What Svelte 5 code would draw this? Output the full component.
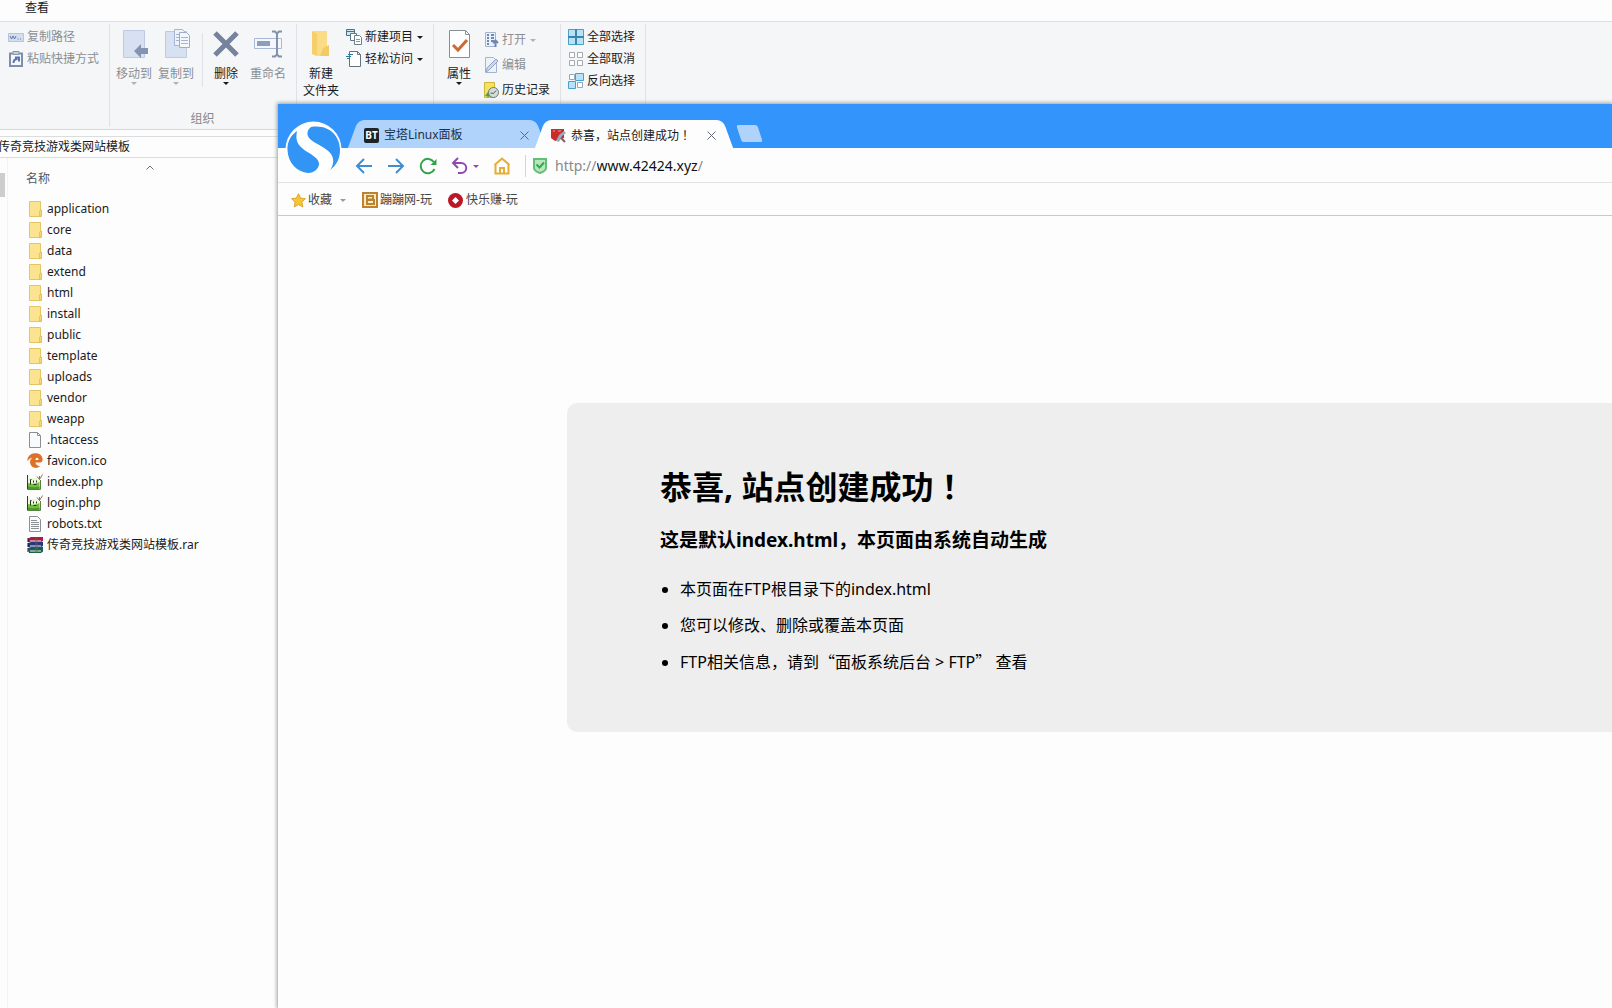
<script lang="ts">
	type FileKind = 'folder' | 'blank' | 'ico' | 'php' | 'txt' | 'rar';

	const files: { name: string; kind: FileKind }[] = [
		{ name: 'application', kind: 'folder' },
		{ name: 'core', kind: 'folder' },
		{ name: 'data', kind: 'folder' },
		{ name: 'extend', kind: 'folder' },
		{ name: 'html', kind: 'folder' },
		{ name: 'install', kind: 'folder' },
		{ name: 'public', kind: 'folder' },
		{ name: 'template', kind: 'folder' },
		{ name: 'uploads', kind: 'folder' },
		{ name: 'vendor', kind: 'folder' },
		{ name: 'weapp', kind: 'folder' },
		{ name: '.htaccess', kind: 'blank' },
		{ name: 'favicon.ico', kind: 'ico' },
		{ name: 'index.php', kind: 'php' },
		{ name: 'login.php', kind: 'php' },
		{ name: 'robots.txt', kind: 'txt' },
		{ name: '传奇竞技游戏类网站模板.rar', kind: 'rar' }
	];

	let folderPath = $state('传奇竞技游戏类网站模板');
	let host = $state('www.42424.xyz');
	let activeTab = $state(1);
</script>

{#snippet fileIcon(kind: FileKind)}
	<svg class="file-icon" viewBox="0 0 16 16" aria-hidden="true">
		{#if kind === 'folder'}
			<path d="M2.5 .5h11v9h1v6h-12z" fill="#fbe38f" stroke="#e3c566" />
			<path d="M12.5 15v-5l2-1v6z" fill="#f7d774" stroke="#dcbb57" stroke-width=".7" />
		{:else if kind === 'blank'}
			<path d="M2.5 .5h8l3 3v12h-11z" fill="#f9fafb" stroke="#8b8e92" />
			<path d="M10.5 .5v3h3" fill="none" stroke="#8b8e92" />
		{:else if kind === 'txt'}
			<path d="M2.5 .5h8l3 3v12h-11z" fill="#f9fafb" stroke="#8b8e92" />
			<path d="M4 4.500h6M4 6.500h8M4 8.500h8M4 10.500h8M4 12.500h8" stroke="#8f9398" />
		{:else if kind === 'ico'}
			<path
				d="M1 4.500C3 1 6-.2 9.500.3c4 .5 6.300 3 6.100 6.700-.1 1.800-1.500 2.600-3.500 2.600H8.500c.3 2 1.800 3.400 4.500 3.700-3.500 3-8.500 2-9.700-2.700C2.600 8 3.500 6 5.500 4.800 4 4.700 2.500 5.500.5 8c-.3-1.300 0-2.500.5-3.500zM8.500 7h3c.2-1.400-.6-2.300-1.700-2.200C8.800 5 8.500 6 8.500 7z"
				fill="#dd7128"
			/>
		{:else if kind === 'php'}
			<path d="M.5 1v14.500h12.500V6L11 4H3z" fill="#eef8dd" />
			<path d="M1 9c3 1 8 1 11.500-1v7.500H1z" fill="#6fc13c" />
			<path d="M1 12.500c4 1 8 1 11.500 0v3H1z" fill="#4a9a2b" />
			<path d="M.5 1v14.500" stroke="#1f3f57" />
			<path d="M1 15.500h12.500V6" fill="none" stroke="#5b7f45" />
			<path d="M10 2.500l2.500 3 3-5M12.500 5.500V2" stroke="#8b735c" fill="none" />
			<path d="M4.500 5.500H3.500v5M6.500 6.500v2M9.500 6.500v2M6.500 10.500h3" stroke="#243421" fill="none" />
		{:else}
			<path d="M1 1.500L4 0h12v4l-2 1H1z" fill="#a81c46" />
			<path d="M1 6l3-1h12v4l-2 1H1z" fill="#28357f" />
			<path d="M1 11l3-1h12v4.500L14 16H2z" fill="#155f50" />
			<path d="M3 4h11M3 9h11M3 14h11" stroke="#eef0f2" />
			<path d="M8 0h3v16H8z" fill="#7a6233" opacity=".4" />
			<path d="M1 1v4M1 6v4M1 11v4" stroke="#141428" />
		{/if}
	</svg>
{/snippet}

<div class="desktop">
	<main class="explorer">
		<nav class="menu"><button>查看</button></nav>

		<div class="ribbon">
			<section class="group clipboard">
				<div class="stack">
					<button class="small muted">
						<svg width="16" height="16" viewBox="0 0 16 16" aria-hidden="true">
							<path d="M.5 4.500h15v8H.5z" fill="#d3def0" stroke="#b6c4dc" />
							<path d="M2 7l1.500 3L5 7l1.500 3L8 7M9.500 10h1M12 10h1" fill="none" stroke="#63799e" />
						</svg>
						复制路径
					</button>
					<button class="small muted">
						<svg width="16" height="16" viewBox="0 0 16 16" aria-hidden="true">
							<path d="M2 2.500h12v12.500H2z" fill="#f5f8fd" stroke="#7d8eae" stroke-width="2" />
							<path d="M5 .5h6v3H5z" fill="#c5cedd" stroke="#8795b0" />
							<path d="M5.500 12c0-3 1-4 4-4M7 6.500h4v4" fill="none" stroke="#5a76a8" stroke-width="2" />
						</svg>
						粘贴快捷方式
					</button>
				</div>
			</section>

			<section class="group organize">
				<div class="row">
					<button class="large muted">
						<svg width="28" height="32" viewBox="0 0 28 32" aria-hidden="true">
							<path d="M3.500 1.500h21v27h-21z" fill="#d8e1f1" stroke="#bdcae2" />
							<path d="M14 22l7-7v4h7v6h-7v4z" fill="#8393b1" />
						</svg>
						<span>移动到</span>
						<i class="caret"></i>
					</button>
					<button class="large muted">
						<svg width="28" height="32" viewBox="0 0 28 32" aria-hidden="true">
							<path d="M3.500 2.500h21v26h-21z" fill="#d8e1f1" stroke="#bdcae2" />
							<path d="M12.500 .5h8l3 3v13h-11z" fill="#eef3fb" stroke="#a5b4d0" />
							<path d="M17.500 3.500h7l3 3v12h-10z" fill="#f4f7fc" stroke="#9cadcc" />
							<path d="M19 8.500h7M19 11.500h7M19 14.500h7M14 5.500h3M14 8.500h3M14 11.500h3" stroke="#a5b4d0" />
						</svg>
						<span>复制到</span>
						<i class="caret"></i>
					</button>
					<div class="divider"></div>
					<button class="large">
						<svg width="28" height="32" viewBox="0 0 28 32" aria-hidden="true">
							<path d="M3 4l22 22M25 4L3 26" stroke="#75839c" stroke-width="5" />
						</svg>
						<span>删除</span>
						<i class="caret"></i>
					</button>
					<button class="large muted">
						<svg width="28" height="32" viewBox="0 0 28 32" aria-hidden="true">
							<path d="M.5 9.500h27v10H.5z" fill="#f4f7fc" stroke="#a9b9d5" />
							<path d="M3 12h13v5H3z" fill="#8d9dbb" />
							<path d="M18 2.500h3l2 2 2-2h3M23 4v22M18 27.500h3l2-2 2 2h3" fill="none" stroke="#8292ae" stroke-width="2" />
						</svg>
						<span>重命名</span>
					</button>
				</div>
				<div class="group-name">组织</div>
			</section>

			<section class="group create">
				<button class="large">
					<svg width="28" height="32" viewBox="0 0 28 32" aria-hidden="true">
						<path d="M5 2h15v15h2v10H10l-5-2z" fill="#fbdc86" />
						<path d="M5 2l5 3v22l-5-2z" fill="#f6cf68" />
						<path d="M16 19l6-3v11h-9z" fill="#f2cb65" />
					</svg>
					<span>新建<br />文件夹</span>
				</button>
				<div class="stack">
					<button class="small">
						<svg width="16" height="16" viewBox="0 0 16 16" aria-hidden="true">
							<path d="M.5 .5h8v6h-8z" fill="#cfe5f1" stroke="#4b7384" />
							<path d="M1 2.500h7" stroke="#4b7384" />
							<path d="M4.500 4.500h6v7h-6z" fill="#fff" stroke="#5d7b87" />
							<path d="M8.500 6.500h5l2 2v7h-7z" fill="#fff" stroke="#6e7e86" />
							<path d="M10 10.500h4M10 12.500h4" stroke="#8b979d" />
						</svg>
						新建项目
						<i class="caret"></i>
					</button>
					<button class="small">
						<svg width="16" height="16" viewBox="0 0 16 16" aria-hidden="true">
							<path d="M3.500 .5h8l3 3v12h-11z" fill="#fff" stroke="#68747c" />
							<path d="M11.500 .5v3h3" fill="none" stroke="#68747c" />
							<path d="M2 3.500h5M0 5.500h5M1 7.500h3" stroke="#2b7897" />
						</svg>
						轻松访问
						<i class="caret"></i>
					</button>
				</div>
			</section>

			<section class="group open">
				<button class="large">
					<svg width="28" height="32" viewBox="0 0 28 32" aria-hidden="true">
						<path d="M4.500 1.500h16l4 4v23h-20z" fill="#fff" stroke="#878e95" />
						<path d="M20.500 1.500v4h4" fill="none" stroke="#878e95" />
						<path d="M8 16l5 5 9-10" fill="none" stroke="#cc6a35" stroke-width="3" />
					</svg>
					<span>属性</span>
					<i class="caret"></i>
				</button>
				<div class="stack loose">
					<button class="small muted">
						<svg width="16" height="16" viewBox="0 0 16 16" aria-hidden="true">
							<path d="M2.500 .5h10v14h-10z" fill="#eaf0f9" stroke="#a5b4cf" />
							<path d="M4 3h2M4 6h2M4 9h2M4 12h2M8 3h3M8 6h3M8 9h3" stroke="#7188b3" stroke-width="2" />
							<path d="M12.500 15V9M10 11l2.500-2.500L15 11" fill="none" stroke="#6d86b2" stroke-width="2" />
						</svg>
						打开
						<i class="caret"></i>
					</button>
					<button class="small muted">
						<svg width="16" height="16" viewBox="0 0 16 16" aria-hidden="true">
							<path d="M2.500 .5h8l3 3v12h-11z" fill="#edf2fa" stroke="#a5b4cf" />
							<path d="M3 15l1-4 9-9 2 2-9 9z" fill="#ccd8eb" stroke="#8fa2c3" />
						</svg>
						编辑
					</button>
					<button class="small">
						<svg width="16" height="16" viewBox="0 0 16 16" aria-hidden="true">
							<path d="M1.500 .5h10v15h-10z" fill="#f7e35b" stroke="#ccb43d" />
							<path d="M2 14l5-7 3 3-4 5z" fill="#48a447" />
							<circle cx="10.500" cy="10.500" r="5" fill="#d5ddd7" stroke="#6e7b72" />
							<path d="M7.500 11l3 .5 2.500-3" fill="none" stroke="#4b6352" />
						</svg>
						历史记录
					</button>
				</div>
			</section>

			<section class="group select">
				<div class="stack">
					<button class="small">
						<svg width="16" height="16" viewBox="0 0 16 16" aria-hidden="true">
							<path d="M.5 .5h15v15H.5z" fill="#b7e2f8" stroke="#4aa0cb" />
							<path d="M8 0v16M0 8h16" stroke="#3b86ac" stroke-width="2" />
						</svg>
						全部选择
					</button>
					<button class="small">
						<svg width="16" height="16" viewBox="0 0 16 16" aria-hidden="true">
							<path d="M1.500 1.500h5v5h-5zM9.500 1.500h5v5h-5zM1.500 9.500h5v5h-5zM9.500 9.500h5v5h-5z" fill="#fff" stroke="#a5a9ad" />
						</svg>
						全部取消
					</button>
					<button class="small">
						<svg width="16" height="16" viewBox="0 0 16 16" aria-hidden="true">
							<path d="M1.500 1.500h5v5h-5zM9.500 9.500h5v5h-5z" fill="#fff" stroke="#8cabc0" />
							<path d="M7.500 .5h8v7h-8zM.5 8.500h7v7h-7z" fill="#b7e2f8" stroke="#4aa0cb" />
						</svg>
						反向选择
					</button>
				</div>
			</section>
		</div>

		<div class="address">
			<input aria-label="路径" bind:value={folderPath} />
		</div>

		<div class="listing">
			<div class="tree-edge"><div class="thumb"></div></div>
			<div class="files">
				<button class="column-head">
					名称
					<svg width="8" height="5" viewBox="0 0 8 5" aria-hidden="true">
						<path d="M.5 4.500L4 1l3.500 3.500" fill="none" stroke="#6b6f73" />
					</svg>
				</button>
				<ul>
					{#each files as file}
						<li>{@render fileIcon(file.kind)}{file.name}</li>
					{/each}
				</ul>
			</div>
		</div>
	</main>

	<div class="browser">
		<header class="titlebar">
			<svg class="logo" viewBox="0 0 57 54" aria-hidden="true">
				<circle cx="28.500" cy="28.500" r="28" fill="#fff" />
				<path d="M12 10C5 15 2 22 2.500 29 3 42 12 51 23 52c3 0 6-1 8-3 4-4 4-8 0-12-5-5-17-9-19-17-1-4-.5-7 0-10z" fill="#3294f5" />
				<path d="M26 6c-4 3-5 8-1 12 5 5 16 8 21 15 4 6 2 12-1 16 7-5 10-12 10-20C55 15 44 3 26 6z" fill="#3294f5" />
			</svg>
			<div class="tabs">
				<button class="tab" class:active={activeTab === 0} onclick={() => (activeTab = 0)}>
					<span class="bt">BT</span>
					<span class="title">宝塔Linux面板</span>
					<svg class="close" viewBox="0 0 9 9" aria-hidden="true"><path d="M.5 .5l8 8M8.500 .5l-8 8" /></svg>
				</button>
				<button class="tab" class:active={activeTab === 1} onclick={() => (activeTab = 1)}>
					<svg width="15" height="15" viewBox="0 0 15 15" aria-hidden="true">
						<path d="M0 1h13v9l-9 3-4-3z" fill="#c92c2b" />
						<path d="M2 3h2M7 3h3" stroke="#eda29a" />
						<path d="M5 13l3-6 5-4 2 2-4 3-3 6z" fill="#9aabba" />
						<path d="M10 10l4 4" stroke="#7b5e66" stroke-width="2" />
					</svg>
					<span class="title">恭喜，站点创建成功<span class="centered">！</span></span>
					<svg class="close" viewBox="0 0 9 9" aria-hidden="true"><path d="M.5 .5l8 8M8.500 .5l-8 8" /></svg>
				</button>
				<button class="new-tab" aria-label="新建标签"></button>
			</div>
		</header>

		<div class="toolbar">
			<button aria-label="后退">
				<svg width="18" height="18" viewBox="0 0 18 18"><path d="M17 9H2M9 2L2 9l7 7" stroke="#3f8ed2" /></svg>
			</button>
			<button aria-label="前进">
				<svg width="18" height="18" viewBox="0 0 18 18"><path d="M1 9h15M9 2l7 7-7 7" stroke="#3f8ed2" /></svg>
			</button>
			<button aria-label="刷新">
				<svg width="18" height="18" viewBox="0 0 18 18">
					<path d="M15.500 12A7.200 7.200 0 1 1 15 5.200" stroke="#32a349" />
					<path d="M17.500 2v6h-6z" fill="#32a349" stroke="none" />
				</svg>
			</button>
			<button class="undo" aria-label="恢复">
				<svg width="18" height="18" viewBox="0 0 18 18"><path d="M7 1L2 6l5 5M2 6h8c7 0 7 10 0 10H7" stroke="#8f49b5" /></svg>
				<i class="caret"></i>
			</button>
			<button aria-label="主页">
				<svg width="18" height="18" viewBox="0 0 18 18">
					<path d="M1.500 8L9 1.500 16.500 8M2.500 7.500V16.500h13V7.500M7 16v-5h4v5" stroke="#e6ae35" />
				</svg>
			</button>
			<div class="line"></div>
			<svg width="14" height="16" viewBox="0 0 14 16" aria-hidden="true">
				<path d="M1 1h12v9c0 2-3 4-6 5-3-1-6-3-6-5z" fill="#b5e8bd" stroke="#65bd77" stroke-width="2" />
				<path d="M3.500 6.500L6.500 9.500l4.500-5" fill="none" stroke="#35a750" stroke-width="2" />
			</svg>
			<label class="url">
				<span>http://</span><input aria-label="网址" bind:value={host} /><span>/</span>
			</label>
		</div>

		<nav class="bookmarks">
			<button class="favorites">
				<svg width="15" height="15" viewBox="0 0 15 15" aria-hidden="true">
					<path d="M7.500 .7l2.100 4.400 4.800.6-3.500 3.400.9 4.800-4.300-2.300-4.300 2.300.9-4.800L.6 5.700l4.800-.6z" fill="#f7c531" stroke="#dfa52e" />
				</svg>
				收藏
				<i class="caret"></i>
			</button>
			<a href="#beng">
				<svg width="16" height="16" viewBox="0 0 16 16" aria-hidden="true">
					<path d="M1 1h14v14H1z" fill="#fbecd0" stroke="#bd822a" stroke-width="2" />
					<path d="M4 4h7v3.500H5M5 4v8h7V8H5" fill="none" stroke="#bd822a" stroke-width="2" />
				</svg>
				蹦蹦网-玩
			</a>
			<a href="#kuaile">
				<svg width="15" height="15" viewBox="0 0 15 15" aria-hidden="true">
					<circle cx="7.500" cy="7.500" r="7.500" fill="#bd1627" />
					<path d="M7.500 4l3.500 3.500L7.500 11 4 7.500z" fill="#fff" />
				</svg>
				快乐赚-玩
			</a>
		</nav>

		<article class="page">
			<div class="card">
				<h1>恭喜, 站点创建成功<span class="centered">！</span></h1>
				<h3>这是默认index.html，本页面由系统自动生成</h3>
				<ul>
					<li>本页面在FTP根目录下的index.html</li>
					<li>您可以修改、删除或覆盖本页面</li>
					<li>FTP相关信息，请到<span class="quote">“</span>面板系统后台 &gt; FTP<span class="quote">”</span> 查看</li>
				</ul>
			</div>
		</article>
	</div>
</div>

<style>
	:global(body) {
		margin: 0;
		background: #fdfdfd;
	}

	.desktop {
		position: relative;
		min-height: 100vh;
		overflow: hidden;
		background: #fdfdfd;
		color: #1a1a1a;
		font-family: 'Noto Sans', 'Noto Sans CJK SC', sans-serif;
		font-size: 12px;
		line-height: 16px;
	}

	button,
	input {
		padding: 0;
		border: 0;
		background: none;
		color: inherit;
		font: inherit;
	}

	button {
		display: flex;
		align-items: center;
		white-space: nowrap;
	}

	svg {
		flex: none;
	}

	ul {
		margin: 0;
		padding: 0;
	}

	/* full-width marks that sit in the middle of their cell */
	.centered {
		font-family: 'Noto Sans CJK TC', sans-serif;
	}

	.quote {
		font-family: 'Noto Sans CJK SC', sans-serif;
	}

	.caret {
		width: 0;
		border: 3px solid transparent;
		border-top-color: currentColor;
		border-bottom: 0;
	}

	.menu {
		display: flex;
		height: 21px;
		padding-left: 25px;
		border-bottom: 1px solid #dcdee0;
	}

	.menu button {
		height: 16px;
	}

	.ribbon {
		display: flex;
		height: 107px;
		background: #f5f6f8;
		border-bottom: 1px solid #d6d8da;
	}

	.group {
		display: flex;
		box-sizing: border-box;
		margin: 2px 0;
		padding-top: 5px;
		border-right: 1px solid #dfe1e4;
	}

	.clipboard {
		width: 110px;
		padding-left: 8px;
	}

	.organize {
		flex-direction: column;
		justify-content: space-between;
		width: 187px;
		padding-left: 3px;
	}

	.create {
		width: 137px;
		padding-left: 3px;
	}

	.open {
		width: 127px;
		padding-left: 4px;
	}

	.select {
		width: 85px;
		padding-left: 7px;
	}

	.row {
		display: flex;
	}

	.large {
		flex-direction: column;
		align-self: flex-start;
		width: 42px;
		line-height: 17px;
	}

	.large span {
		margin-top: 4px;
	}

	.stack {
		display: flex;
		flex-direction: column;
		gap: 6px;
	}

	.create .stack {
		padding-left: 4px;
	}

	.loose {
		gap: 9px;
		padding: 3px 0 0 3px;
	}

	.small {
		gap: 3px;
	}

	.muted {
		color: #8b8f94;
	}

	.muted .caret {
		border-top-color: #b0b3b6;
	}

	.small .caret {
		margin-left: 1px;
	}

	.divider {
		width: 1px;
		height: 54px;
		margin: 4px 2px 0 5px;
		background: #dfe1e4;
	}

	.group-name {
		padding-right: 4px;
		color: #85898d;
		text-align: center;
	}

	.address {
		display: flex;
		height: 20px;
		margin-top: 6px;
		border: solid #dcdddf;
		border-width: 1px 0;
	}

	.address input {
		width: 240px;
		text-indent: -2px;
	}

	.listing {
		display: flex;
	}

	.tree-edge {
		width: 7px;
		height: 835px;
		padding-top: 15px;
		border-right: 1px solid #f2f3f4;
	}

	.thumb {
		width: 5px;
		height: 24px;
		background: #cdcdcd;
	}

	.column-head {
		gap: 96px;
		align-items: flex-start;
		height: 30px;
		margin: 6px 0 4px 18px;
		color: #4c5a6a;
		line-height: 30px;
	}

	.column-head svg {
		margin-top: 1px;
	}

	.files {
		display: flex;
		flex-direction: column;
	}

	.files li {
		display: flex;
		align-items: center;
		gap: 4px;
		height: 21px;
		padding-left: 19px;
		list-style: none;
	}

	.file-icon {
		width: 16px;
		height: 16px;
	}

	.browser {
		position: absolute;
		top: 104px;
		right: 0;
		bottom: 0;
		left: 278px;
		display: flex;
		flex-direction: column;
		background: #fdfdfd;
		box-shadow: 0 0 4px 1px #9a9a9a;
	}

	.titlebar {
		position: relative;
		display: flex;
		align-items: flex-end;
		height: 44px;
		padding-left: 70px;
		background: #3395fb;
	}

	.logo {
		position: absolute;
		top: 17px;
		left: 7px;
		width: 57px;
		height: 54px;
	}

	.tabs {
		display: flex;
	}

	.tab {
		position: relative;
		z-index: 0;
		gap: 5px;
		box-sizing: border-box;
		width: 198px;
		height: 28px;
		padding: 2px 17px 0 16px;
		color: #1c3048;
		--tab-fill: #afd3fb;
	}

	.tab + .tab {
		margin-left: -11px;
	}

	.tab::before,
	.tab::after {
		content: '';
		position: absolute;
		z-index: -1;
		top: 0;
		bottom: 0;
		left: 5px;
		width: 55%;
		background: var(--tab-fill);
		border-radius: 6px 0 0 0;
		transform: skewX(-20deg);
	}

	.tab::after {
		right: 5px;
		left: auto;
		border-radius: 0 6px 0 0;
		transform: skewX(20deg);
	}

	.tab.active {
		z-index: 1;
		color: #1a1a1a;
		--tab-fill: #fdfdfd;
	}

	.title {
		flex: 1;
		text-align: left;
	}

	.close {
		width: 9px;
		height: 9px;
		stroke: #60676f;
		fill: none;
	}

	.bt {
		width: 15px;
		background: #1e2328;
		border-radius: 2px;
		color: #fff;
		font-size: 10px;
		font-weight: 700;
		line-height: 15px;
		text-align: center;
	}

	.new-tab {
		width: 21px;
		height: 17px;
		margin: 5px 0 0 6px;
		background: #afd3fb;
		border-radius: 2px;
		transform: skewX(18deg);
	}

	.toolbar {
		display: flex;
		align-items: center;
		gap: 14px;
		box-sizing: border-box;
		height: 35px;
		padding: 2px 0 0 77px;
		border-bottom: 1px solid #e2e3e4;
	}

	.toolbar button svg {
		fill: none;
		stroke-width: 2;
	}

	.undo {
		gap: 4px;
		color: #8f49b5;
	}

	.line {
		width: 1px;
		height: 22px;
		background: #d2d4d6;
	}

	.toolbar .line {
		margin-right: -7px;
	}

	.url {
		display: flex;
		margin-left: -6px;
		color: #8a8a8a;
		font-size: 14px;
		line-height: 20px;
	}

	.url input {
		field-sizing: content;
		color: #111;
	}

	.bookmarks {
		display: flex;
		align-items: center;
		gap: 16px;
		box-sizing: border-box;
		height: 33px;
		padding: 2px 0 0 13px;
		border-bottom: 1px solid #c8c9ca;
		color: #444;
	}

	.bookmarks a,
	.favorites {
		display: flex;
		align-items: center;
		gap: 2px;
		color: inherit;
		text-decoration: none;
	}

	.bookmarks a + a {
		gap: 3px;
	}

	.favorites .caret {
		margin-left: 6px;
		border-top-color: #9a9da0;
	}

	.page {
		flex: 1;
		padding: 187px 0 0 289px;
		color: #000;
	}

	.card {
		padding: 60px 93px 52px;
		background: #eee;
		border-radius: 10px 0 0 10px;
	}

	h1 {
		margin: 0;
		font-size: 32px;
		line-height: 44px;
	}

	h3 {
		margin: 18px 0;
		font-size: 19px;
		line-height: 26px;
	}

	.card ul {
		padding-left: 20px;
		font-size: 16px;
	}

	.card li {
		line-height: 36px;
	}
</style>
